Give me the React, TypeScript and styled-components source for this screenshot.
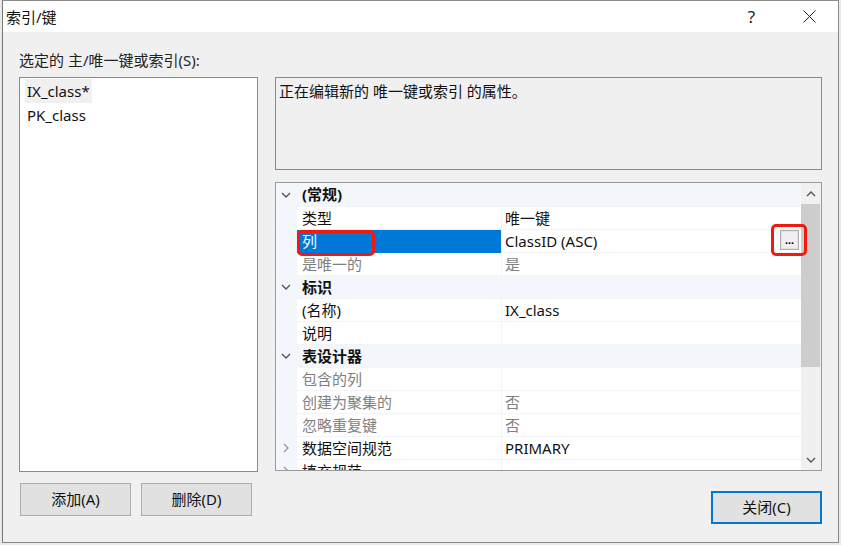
import React from "react";
import styled, { createGlobalStyle } from "styled-components";

const Global = createGlobalStyle`
  html, body { margin: 0; padding: 0; background: #f0f0f0; overflow: hidden; }
  * { box-sizing: border-box; }
`;
const FONT = `"Noto Sans", "Noto Sans CJK SC", sans-serif`;
const Stage = styled.div`
  width: 841px; height: 545px; padding: 0 2px 2px 2px; background: #e9e9e9;
  font-family: ${FONT}; font-size: 15px; color: #111;
`;
const Win = styled.div`
  width: 837px; height: 543px; border: 1px solid #8a8a8a; border-left-color: #777; background: #f0f0f0;
  display: flex; flex-direction: column;
`;
const TitleBar = styled.div`
  height: 31px; background: #fff; display: flex; align-items: center; padding-left: 3px;
  flex: none;
`;
const TitleText = styled.span`flex: 1; padding-bottom: 1px;`;
const TitleBtn = styled.button<{ $w: number }>`
  width: ${(p) => p.$w}px; height: 31px; border: 0; background: transparent; padding: 0; margin: 0;
  display: flex; align-items: center; justify-content: center; font: 17px "Noto Sans", sans-serif; color: #222;
`;
const Body = styled.div`
  flex: 1; display: grid; grid-template-columns: 239px 547px; column-gap: 17px;
  padding: 19px 0 0 16px; align-content: start;
`;
const Label = styled.div`grid-column: 1 / 3; height: 26px; line-height: 18px; color: #222;`;
const ListBox = styled.div`
  grid-column: 1; height: 395px; border: 1px solid #8a8a8a; background: #fff; padding: 1px 5px;
`;
const ListItem = styled.div<{ $active?: boolean }>`
  height: 24px; line-height: 24px; width: fit-content; padding: 0 2px;
  background: ${(p) => (p.$active ? "#f0f0f0" : "transparent")};
  font-size: 15px;
`;
const RightCol = styled.div`grid-column: 2; display: flex; flex-direction: column; gap: 12px;`;
const Desc = styled.div`
  height: 93px; border: 1px solid #8a8a8a; background: #f0f0f0; padding: 3px 3px; line-height: 20px;
`;
const Props = styled.div`
  height: 289px; border: 1px solid #9a9a9a; background: #fff; display: flex; overflow: hidden; position: relative;
`;
const Rows = styled.div`flex: 1; overflow: hidden; display: flex; flex-direction: column;`;
const Row = styled.div<{ $group?: boolean }>`
  flex: none; height: 23px; display: grid; grid-template-columns: 21px 204px 1fr;
  background: ${(p) => (p.$group ? "#f3f6fb" : "#fff")};
  border-bottom: 1px solid #f2f4f9;
  &:first-child { height: 24px; }
`;
const Gutter = styled.div`
  background: #f3f6fb; display: flex; align-items: center; justify-content: center; padding-right: 1px;
`;
const Name = styled.div<{ $sel?: boolean; $dim?: boolean; $bold?: boolean }>`
  padding: 1px 0 0 5px; line-height: 21px; white-space: nowrap; overflow: hidden;
  background: ${(p) => (p.$sel ? "#0078d7" : "transparent")};
  color: ${(p) => (p.$sel ? "#fff" : p.$dim ? "#808080" : "#111")};
  font-weight: ${(p) => (p.$bold ? 700 : 400)};
`;
const Value = styled.div<{ $dim?: boolean }>`
  padding: 1px 0 0 3px; line-height: 21px; white-space: nowrap; border-left: 1px solid #f2f4f9;
  color: ${(p) => (p.$dim ? "#808080" : "#111")};
`;
const ValueRow = styled(Value)`display: flex; justify-content: space-between; padding: 0 2px 0 3px; line-height: 23px;`;
const EllipsisBtn = styled.span`
  width: 19px; height: 20px; border: 1px solid #adadad; outline: 1px solid #e4e4e4; outline-offset: -2px; background: #efefef;
  display: flex; align-items: center; justify-content: center; font: 700 11px/14px "Liberation Sans", sans-serif; color: #000;
`;
const Bar = styled.div`
  width: 20px; flex: none; background: #f0f0f0; display: flex; flex-direction: column; border-right: 1px solid #f0f0f0;
`;
const Arrow = styled.div`height: 21px; display: flex; align-items: center; justify-content: center; flex: none;`;
const Thumb = styled.div`height: 163px; background: #cdcdcd; flex: none;`;
const Spacer = styled.div`flex: 1;`;
const Footer = styled.div`
  grid-column: 1 / 3; display: flex; align-items: flex-start; padding: 11px 0 0 1px;
`;
const Btn = styled.button<{ $primary?: boolean }>`
  width: 111px; height: 33px;
  margin: ${(p) => (p.$primary ? "8px 0 0 auto" : "0 10px 0 0")};
  border: ${(p) => (p.$primary ? "2px solid #0078d7" : "1px solid #adadad")};
  background: #e1e1e1; font-family: ${FONT}; font-size: 15px; color: #111; padding: 0 0 2px;
`;
const Mark = styled.div<{ $x: number; $y: number; $w: number; $h: number }>`
  position: absolute; left: ${(p) => p.$x}px; top: ${(p) => p.$y}px; width: ${(p) => p.$w}px; height: ${(p) => p.$h}px;
  border: 3px solid #f01a10; border-radius: 5px;
`;

type Dir = "up" | "down" | "right";
const Chevron = ({ dir, color = "#555" }: { dir: Dir; color?: string }) => (
  <svg width="10" height="10" viewBox="0 0 10 10" fill="none" stroke={color} strokeWidth="1.4">
    {dir === "down" && <path d="M1 3l4 4 4-4" />}
    {dir === "up" && <path d="M1 7l4-4 4 4" />}
    {dir === "right" && <path d="M3 1l4 4-4 4" />}
  </svg>
);

type R = { n: string; v?: string; dim?: boolean; group?: boolean; sel?: boolean; exp?: boolean };
const rows: R[] = [
  { n: "(常规)", group: true },
  { n: "类型", v: "唯一键" },
  { n: "列", v: "ClassID (ASC)", sel: true },
  { n: "是唯一的", v: "是", dim: true },
  { n: "标识", group: true },
  { n: "(名称)", v: "IX_class" },
  { n: "说明", v: "" },
  { n: "表设计器", group: true },
  { n: "包含的列", v: "", dim: true },
  { n: "创建为聚集的", v: "否", dim: true },
  { n: "忽略重复键", v: "否", dim: true },
  { n: "数据空间规范", v: "PRIMARY", exp: true },
  { n: "填充规范", v: "", exp: true },
];

export default function App() {
  return (
    <Stage>
      <Global />
      <Win>
        <TitleBar>
          <TitleText>索引/键</TitleText>
          <TitleBtn $w={57} aria-label="帮助">?</TitleBtn>
          <TitleBtn $w={58} aria-label="关闭">
            <svg width="13" height="13" viewBox="0 0 13 13" stroke="#222" strokeWidth="1" fill="none">
              <path d="M.5.5l12 12M12.5.5l-12 12" />
            </svg>
          </TitleBtn>
        </TitleBar>
        <Body>
          <Label>选定的 主/唯一键或索引(S):</Label>
          <ListBox>
            <ListItem $active>IX_class*</ListItem>
            <ListItem>PK_class</ListItem>
          </ListBox>
          <RightCol>
            <Desc>正在编辑新的 唯一键或索引 的属性。</Desc>
            <Props>
              <Rows>
                {rows.map((r) => (
                  <Row key={r.n} $group={r.group}>
                    <Gutter>
                      {r.group ? <Chevron dir="down" /> : r.exp ? <Chevron dir="right" color="#999" /> : null}
                    </Gutter>
                    <Name $sel={r.sel} $dim={r.dim} $bold={r.group}>{r.n}</Name>
                    {r.group ? <div /> : r.sel ? (
                      <ValueRow>{r.v}<EllipsisBtn>...</EllipsisBtn></ValueRow>
                    ) : (
                      <Value $dim={r.dim}>{r.v}</Value>
                    )}
                  </Row>
                ))}
              </Rows>
              <Bar>
                <Arrow><Chevron dir="up" /></Arrow>
                <Thumb />
                <Spacer />
                <Arrow><Chevron dir="down" /></Arrow>
              </Bar>
              <Mark $x={21} $y={47} $w={78} $h={26} />
              <Mark $x={495} $y={41} $w={36} $h={32} />
            </Props>
          </RightCol>
          <Footer>
            <Btn>添加(A)</Btn>
            <Btn>删除(D)</Btn>
            <Btn $primary>关闭(C)</Btn>
          </Footer>
        </Body>
      </Win>
    </Stage>
  );
}
